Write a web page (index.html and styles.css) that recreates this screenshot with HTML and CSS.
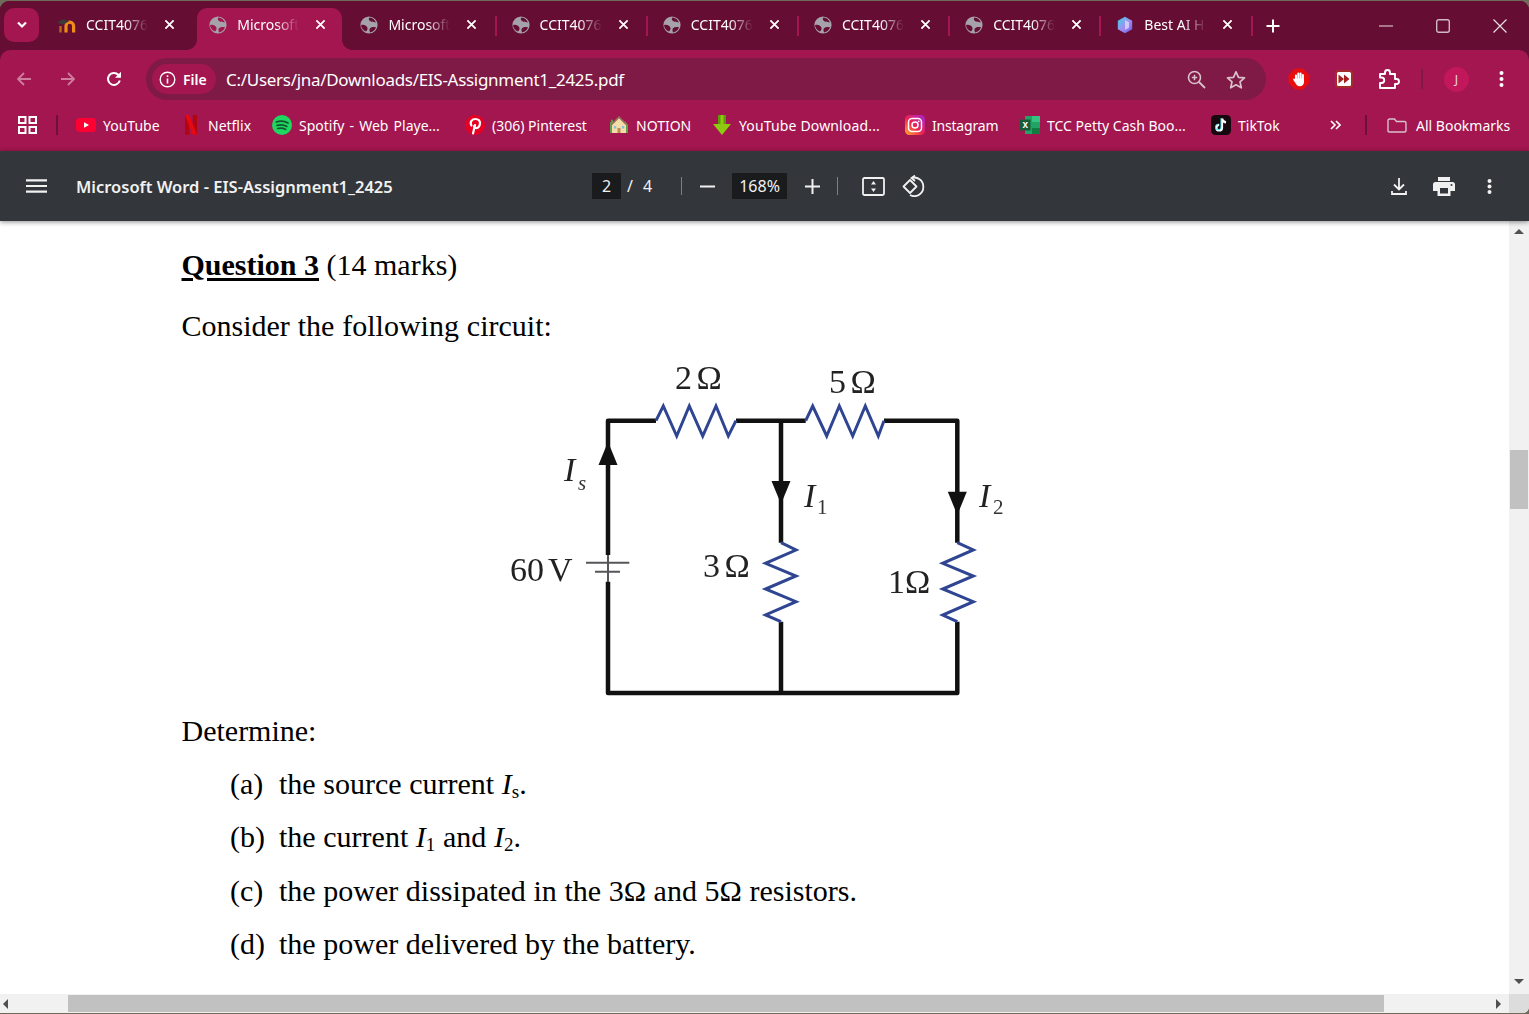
FILE: index.html
```html
<!DOCTYPE html>
<html lang="en">
<head>
  <meta charset="UTF-8">
  <title>Microsoft Word - EIS-Assignment1_2425</title>
  <link rel="stylesheet" href="styles.css">
</head>
<body>
  <svg class="defs" width="0" height="0">
    <symbol id="ic-x" viewBox="0 0 12 12"><path d="M1.5 1.5l9 9M10.5 1.5l-9 9" fill="none" stroke="currentColor" stroke-width="2"/></symbol>
    <symbol id="ic-globe" viewBox="0 0 18 18">
      <circle cx="9" cy="9" r="8.6" fill="#a5a3a9"/>
      <path d="M9.5 1.4C8 3 9.2 4.6 11 5.4c1.8.8 3.600.4 4.900 1.100C15 3.800 12.500 1.600 9.500 1.400zM1 9.200c2.300-.9 4.500-.1 6 1.600 1.200 1.500.4 3.800-1 4.700-2.800-1.100-4.800-3.400-5-6.300zM10 12.200c1.600-1.500 3.900-1.500 6-1-.9 2.700-3.100 4.700-5.800 5.300-.8-1.300-1.100-3.100-.2-4.300z" fill="currentColor"/>
    </symbol>
  </svg>

  <div class="window">
    <!-- Tabs -->
    <div class="tabstrip">
      <div class="tab-search">
        <svg width="12" height="8" viewBox="0 0 12 8"><path d="M2 1.500l4 4 4-4" fill="none" stroke="#fff" stroke-width="2.200"/></svg>
      </div>
      <div class="tab no-sep">
        <svg class="favicon moodle" viewBox="0 0 20 18">
          <path d="M3.500 10v6.500" stroke="#b8691a" stroke-width="2.400" fill="none"/>
          <path d="M9 16.500V10a3.800 3.800 0 0 1 7.600 0v6.500" fill="none" stroke="#ee8d17" stroke-width="3.200"/>
          <path d="M0 6.500L6.500 3 12 5.500 5.500 8.800z" fill="#3c3b3a"/>
        </svg>
        <span class="tab-title">CCIT4076</span>
        <svg class="tab-close"><use href="#ic-x"/></svg>
      </div>
      <div class="tab tab-active no-sep">
        <svg class="favicon globe"><use href="#ic-globe"/></svg>
        <span class="tab-title">Microsoft</span>
        <svg class="tab-close"><use href="#ic-x"/></svg>
      </div>
      <div class="tab">
        <svg class="favicon globe"><use href="#ic-globe"/></svg>
        <span class="tab-title">Microsoft</span>
        <svg class="tab-close"><use href="#ic-x"/></svg>
      </div>
      <div class="tab">
        <svg class="favicon globe"><use href="#ic-globe"/></svg>
        <span class="tab-title">CCIT4076</span>
        <svg class="tab-close"><use href="#ic-x"/></svg>
      </div>
      <div class="tab">
        <svg class="favicon globe"><use href="#ic-globe"/></svg>
        <span class="tab-title">CCIT4076</span>
        <svg class="tab-close"><use href="#ic-x"/></svg>
      </div>
      <div class="tab">
        <svg class="favicon globe"><use href="#ic-globe"/></svg>
        <span class="tab-title">CCIT4076</span>
        <svg class="tab-close"><use href="#ic-x"/></svg>
      </div>
      <div class="tab">
        <svg class="favicon globe"><use href="#ic-globe"/></svg>
        <span class="tab-title">CCIT4076</span>
        <svg class="tab-close"><use href="#ic-x"/></svg>
      </div>
      <div class="tab">
        <svg class="favicon" viewBox="0 0 18 18">
          <defs><linearGradient id="hexfill" x1="0" y1="0" x2="1" y2="1"><stop offset="0" stop-color="#38d6e8"/><stop offset=".55" stop-color="#a58bf0"/><stop offset="1" stop-color="#5a5ae6"/></linearGradient></defs>
          <path d="M9 .8l7.200 4v8.400L9 17.200 1.800 13.200V4.800z" fill="url(#hexfill)"/>
          <path d="M9 4l4 2.200v5.600L9 14z" fill="#e6dcff" opacity=".75"/>
        </svg>
        <span class="tab-title">Best AI H</span>
        <svg class="tab-close"><use href="#ic-x"/></svg>
      </div>
      <svg class="new-tab" width="14" height="14" viewBox="0 0 14 14"><path d="M7 .5v13M.5 7h13" stroke="#fff" stroke-width="2"/></svg>
      <div class="win-controls">
        <svg width="14" height="14" viewBox="0 0 14 14"><path d="M0 7h14" stroke="#eadfe4" stroke-width="1.200"/></svg>
        <svg width="14" height="14" viewBox="0 0 14 14"><rect x=".7" y=".7" width="12.600" height="12.600" rx="2" fill="none" stroke="#cdbcc4" stroke-width="1.400"/></svg>
        <svg width="14" height="14" viewBox="0 0 14 14"><path d="M.5.500l13 13M13.500.500l-13 13" stroke="#eadfe4" stroke-width="1.200"/></svg>
      </div>
    </div>

    <!-- Toolbar -->
    <div class="toolbar">
      <svg class="nav-btn faded" viewBox="0 0 16 16"><path d="M15 8H2M8 2L2 8l6 6" fill="none" stroke="currentColor" stroke-width="1.800"/></svg>
      <svg class="nav-btn faded" viewBox="0 0 16 16"><path d="M1 8h13M8 2l6 6-6 6" fill="none" stroke="currentColor" stroke-width="1.800"/></svg>
      <svg class="nav-btn reload" viewBox="0 0 16 16"><path d="M13.800 9.500A6 6 0 1 1 12.300 3.700L14.500 6" fill="none" stroke="currentColor" stroke-width="2"/><path d="M15 .8V6.800H9z" fill="currentColor"/></svg>
      <div class="omnibox">
        <div class="file-chip">
          <svg width="17" height="17" viewBox="0 0 17 17"><circle cx="8.500" cy="8.500" r="7.300" fill="none" stroke="#fff" stroke-width="1.400"/><path d="M8.500 7.500v5M8.500 4.300v1.600" stroke="#fff" stroke-width="1.600"/></svg>
          <span>File</span>
        </div>
        <span class="url">C:/Users/jna/Downloads/EIS-Assignment1_2425.pdf</span>
        <svg class="omni-icon" width="19" height="19" viewBox="0 0 19 19"><circle cx="7.500" cy="7.500" r="6" fill="none" stroke="#d9c2cc" stroke-width="1.600"/><path d="M12 12l6 6" stroke="#d9c2cc" stroke-width="1.800"/><path d="M7.500 4.800v5.400M4.800 7.500h5.400" stroke="#d9c2cc" stroke-width="1.500"/></svg>
        <svg class="omni-icon" width="20" height="19" viewBox="0 0 20 19"><path d="M10 1.800l2.500 5.500 6 .6-4.500 4 1.300 5.900L10 14.800 4.700 17.800 6 11.900 1.500 7.900l6-.6z" fill="none" stroke="#d9c2cc" stroke-width="1.700" stroke-linejoin="round"/></svg>
      </div>
      <svg class="ext-block" width="22" height="22" viewBox="0 0 22 22">
        <path d="M7 .5h8L21.500 7v8L15 21.500H7L.5 15V7z" fill="#e60f0f"/>
        <path d="M8 12V7.500M10.300 11V5.500M12.600 11V5.500M14.900 12V7" fill="none" stroke="#fff" stroke-width="2" stroke-linecap="round"/>
        <path d="M7 10.500h9V14c0 2.600-1.700 4.200-4.200 4.200-2.200 0-3.200-1.100-4.200-2.900L5.300 12c-.6-1.200.9-2 1.700-.8z" fill="#fff"/>
      </svg>
      <svg class="ext-skip" width="18" height="18" viewBox="0 0 18 18">
        <rect width="18" height="18" rx="3" fill="#a52a2a"/><rect x="2" y="2" width="14" height="14" rx="1.500" fill="#fff"/>
        <path d="M3.500 4.500L9 9l-5.500 4.500zM9 4.500L14.500 9 9 13.500z" fill="#a3201f"/>
      </svg>
      <svg class="ext-puzzle" width="22" height="22" viewBox="0 0 22 22"><path d="M2 6h5V4.500a2.500 2.500 0 0 1 5 0V6h5v5h1.500a2.500 2.500 0 0 1 0 5H17v4H2v-5h1.500a2.500 2.500 0 0 0 0-5.500H2z" fill="none" stroke="#fff" stroke-width="1.900" stroke-linejoin="round"/></svg>
      <span class="tool-sep"></span>
      <div class="avatar">J</div>
      <svg class="dots" width="5" height="16" viewBox="0 0 5 16"><circle cx="2.500" cy="2" r="2" fill="#fff"/><circle cx="2.500" cy="8" r="2" fill="#fff"/><circle cx="2.500" cy="14" r="2" fill="#fff"/></svg>
    </div>

    <!-- Bookmarks -->
    <div class="bookmarks">
      <svg class="apps" width="19" height="18" viewBox="0 0 19 18"><path d="M1 1h6.500v6H1zM11.500 1H18v6h-6.500zM1 11h6.500v6H1zM11.500 11H18v6h-6.500z" fill="none" stroke="#fff" stroke-width="2"/></svg>
      <span class="bm-sep"></span>
      <div class="bm bm-youtube">
        <svg class="bm-icon" viewBox="0 0 20 20"><rect y="3" width="20" height="14" rx="4" fill="#ff0033"/><path d="M8 7.200l5 2.800-5 2.800z" fill="#fff"/></svg>
        <span>YouTube</span>
      </div>
      <div class="bm bm-netflix">
        <svg class="bm-icon" viewBox="0 0 20 20"><path d="M4 0h4.200v20L4 19.500z" fill="#b1060f"/><path d="M11.800 0H16v19.500L11.800 20z" fill="#b1060f"/><path d="M4 0h4.200l7.800 19.500-4.200.5z" fill="#e50914"/></svg>
        <span>Netflix</span>
      </div>
      <div class="bm bm-spotify">
        <svg class="bm-icon" viewBox="0 0 20 20"><circle cx="10" cy="10" r="10" fill="#1ed760"/><path d="M4.200 7c4-1.200 8.500-.9 11.800 1M5 10.400c3.400-1 7-.7 9.900 1M5.600 13.500c2.800-.8 5.700-.5 8.100.9" fill="none" stroke="#14542c" stroke-width="1.700" stroke-linecap="round"/></svg>
        <span>Spotify - Web Playe...</span>
      </div>
      <div class="bm bm-pinterest">
        <svg class="bm-icon" viewBox="0 0 20 20"><circle cx="10" cy="10" r="10" fill="#e60023"/><path d="M8 18.500l2-8.500M6.400 10.500C4.500 7 7 4 10.500 4c3 0 4.800 2 4.500 4.700-.3 2.800-2 4.600-4 4.300-1.300-.2-2-1-1.900-2" fill="none" stroke="#fff" stroke-width="2.200" stroke-linecap="round"/></svg>
        <span>(306) Pinterest</span>
      </div>
      <div class="bm bm-notion">
        <svg class="bm-icon" viewBox="0 0 20 20"><path d="M1 8l2-4 2 3v11H1zM16 6l3 4v8h-3z" fill="#5f9e4a"/><path d="M3 10l7-7 7 7v8H3z" fill="#f4dba8"/><path d="M1.500 10.500L10 2l8.500 8.500" fill="none" stroke="#8d7a5a" stroke-width="1.400"/><path d="M8.500 13h3v5h-3z" fill="#b98b52"/><path d="M5 11h2.200v2.500H5zM13 11h2.200v2.500H13z" fill="#7fc1e8"/></svg>
        <span>NOTION</span>
      </div>
      <div class="bm bm-ytdl">
        <svg class="bm-icon" viewBox="0 0 20 20"><path d="M6 0h8v9h5l-9 11L1 9h5z" fill="#8ecb10"/><path d="M6 0h2.500v9H6zM11.500 0H14v9h-2.500z" fill="#5f9908"/></svg>
        <span>YouTube Download...</span>
      </div>
      <div class="bm bm-insta">
        <svg class="bm-icon" viewBox="0 0 20 20">
          <defs><linearGradient id="igfill" x1="0" y1="1" x2="1" y2="0"><stop offset="0" stop-color="#feb32b"/><stop offset=".45" stop-color="#f0234f"/><stop offset="1" stop-color="#a524d8"/></linearGradient></defs>
          <rect width="20" height="20" rx="4.500" fill="url(#igfill)"/><rect x="3.500" y="3.500" width="13" height="13" rx="3.500" fill="none" stroke="#fff" stroke-width="1.500"/><circle cx="10" cy="10" r="3" fill="none" stroke="#fff" stroke-width="1.500"/><circle cx="13.700" cy="6.300" r=".9" fill="#fff"/>
        </svg>
        <span>Instagram</span>
      </div>
      <div class="bm bm-tcc">
        <svg class="bm-icon" viewBox="0 0 20 20"><path d="M5 1h15v18H5z" fill="#21a366"/><path d="M12 1h8v6h-8z" fill="#33c481"/><path d="M12 13h8v6h-8z" fill="#107c41"/><path d="M0 4.500h10.500v11H0z" fill="#185c37"/><text class="xl-text" x="5.200" y="13.200">x</text></svg>
        <span>TCC Petty Cash Boo...</span>
      </div>
      <div class="bm bm-tiktok">
        <svg class="bm-icon" viewBox="0 0 20 20"><rect width="20" height="20" rx="4.500" fill="#15090f"/><path d="M11 3.500v9.200a2.800 2.800 0 1 1-2.800-2.800M11 3.500c.3 2.200 1.800 3.600 4 3.800" fill="none" stroke="#fff" stroke-width="2.200"/><path d="M10 3v9a2.800 2.800 0 1 1-2.800-2.800" fill="none" stroke="#35e3e9" stroke-width=".9"/></svg>
        <span>TikTok</span>
      </div>
      <svg class="bm-more" width="11" height="10" viewBox="0 0 11 10"><path d="M1 1l4 4-4 4M6 1l4 4-4 4" fill="none" stroke="#fff" stroke-width="1.600"/></svg>
      <span class="bm-sep bm-sep-right"></span>
      <div class="bm bm-all">
        <svg class="bm-icon" viewBox="0 0 20 20"><path d="M1 5.500a1.500 1.500 0 0 1 1.500-1.500h5l2 2.500h8a1.500 1.500 0 0 1 1.500 1.500v7.500a1.500 1.500 0 0 1-1.500 1.500h-15A1.500 1.500 0 0 1 1 15z" fill="none" stroke="#d9c2cc" stroke-width="1.400"/></svg>
        <span>All Bookmarks</span>
      </div>
    </div>

    <!-- PDF viewer toolbar -->
    <div class="pdf-bar">
      <svg class="pdf-menu" width="21" height="14" viewBox="0 0 21 14"><path d="M0 1.300h21M0 7h21M0 12.700h21" stroke="#f1f1f1" stroke-width="2.200"/></svg>
      <span class="pdf-title">Microsoft Word - EIS-Assignment1_2425</span>
      <span class="num-box page-box">2</span>
      <span class="pdf-slash">/</span>
      <span class="pdf-total">4</span>
      <span class="pdf-sep sep-a"></span>
      <svg class="zoom-btn minus" width="15" height="15" viewBox="0 0 15 15"><path d="M0 7.500h15" stroke="#f1f1f1" stroke-width="2"/></svg>
      <span class="num-box zoom-box">168%</span>
      <svg class="zoom-btn plus" width="15" height="15" viewBox="0 0 15 15"><path d="M0 7.500h15M7.500 0v15" stroke="#f1f1f1" stroke-width="2"/></svg>
      <span class="pdf-sep sep-b"></span>
      <svg class="fit-btn" width="23" height="19" viewBox="0 0 23 19"><rect x="1" y="1" width="21" height="17" rx="1.500" fill="none" stroke="#f1f1f1" stroke-width="1.800"/><path d="M11.500 4l2.500 3.500H9zM11.500 15L9 11.500h5z" fill="#f1f1f1"/></svg>
      <svg class="rotate-btn" width="23" height="22" viewBox="0 0 23 22"><path d="M8 5L14.500 11.500 8 18 1.500 11.500z" fill="none" stroke="#f1f1f1" stroke-width="1.800" stroke-linejoin="round"/><path d="M9.500 3a9 9 0 0 1 11.800 8.500A9 9 0 0 1 8 20" fill="none" stroke="#f1f1f1" stroke-width="1.800"/><path d="M13 .5L9.500 3l3.500 3" fill="none" stroke="#f1f1f1" stroke-width="1.800"/></svg>
      <div class="pdf-right">
        <svg width="16" height="17" viewBox="0 0 16 17"><path d="M8 0v11M3 6.500l5 5 5-5" fill="none" stroke="#f1f1f1" stroke-width="1.800"/><path d="M1 13v3h14v-3" fill="none" stroke="#f1f1f1" stroke-width="1.800"/></svg>
        <svg class="print-btn" width="22" height="19" viewBox="0 0 22 19"><path d="M5 0h12v4H5z" fill="#f1f1f1"/><path d="M2.500 5h17A2.500 2.500 0 0 1 22 7.500V14h-4.500v5h-13v-5H0V7.500A2.500 2.500 0 0 1 2.500 5z" fill="#f1f1f1"/><path d="M7 11h8v5.500H7z" fill="#33363a"/><circle cx="18.500" cy="8" r="1" fill="#33363a"/></svg>
        <svg width="5" height="15" viewBox="0 0 5 15"><circle cx="2.500" cy="2" r="2" fill="#f1f1f1"/><circle cx="2.500" cy="7.500" r="2" fill="#f1f1f1"/><circle cx="2.500" cy="13" r="2" fill="#f1f1f1"/></svg>
      </div>
    </div>

    <!-- Page -->
    <div class="viewer">
      <div class="doc">
        <p class="doc-line"><b class="q-title">Question 3</b> (14 marks)</p>
        <p class="doc-line consider">Consider the following circuit:</p>
        <svg class="circuit" width="520" height="360" viewBox="500 350 520 360">
          <path class="wire" d="M608 555V420.700H656M736 420.700H805.700M884 420.700H957.300V542.700M781 420.700V542.700M781 621.700V693M957.300 621.700V693H608V581.700"/>
          <path class="plate" d="M608 555V582"/>
          <path class="plate" d="M586 562.700H629.300M595 571.700H620"/>
          <path class="res" d="M656 420.700L663.300 406 676.700 436 689.300 406 702.700 436 716 406 728.300 436 736 420.700"/>
          <path class="res" d="M805.700 420.700L812.700 406 826.700 436 839.300 406 852.700 436 865.300 406 878.300 436 884 420.700"/>
          <path class="res" d="M781 542.700L796 550 765.500 563.300 796 576 765.500 589 796 601.700 765.500 615 781 621.700"/>
          <path class="res" d="M957.300 542.700L973.300 550 942.700 563.300 973.300 576 942.700 589 973.300 601.700 942.700 615 957.300 621.700"/>
          <path class="arrow" d="M608 441.700L617.500 465H598.500z"/>
          <path class="arrow" d="M781 504L771.500 481H790.500z"/>
          <path class="arrow" d="M957.300 515L947.800 491.700H966.800z"/>
          <text class="lbl" x="675" y="389">2 Ω</text>
          <text class="lbl" x="829" y="393">5 Ω</text>
          <text class="lbl" x="703" y="577">3 Ω</text>
          <text class="lbl" x="888" y="593">1Ω</text>
          <text class="lbl" x="510" y="581">60 V</text>
          <text class="lbl lbl-i" x="564" y="481">I</text>
          <text class="lbl-s lbl-i" x="578" y="490">s</text>
          <text class="lbl lbl-i" x="804" y="507">I</text>
          <text class="lbl-s" x="817" y="514">1</text>
          <text class="lbl lbl-i" x="979" y="507">I</text>
          <text class="lbl-s" x="993" y="514">2</text>
        </svg>
        <p class="doc-line determine">Determine:</p>
        <div class="parts">
          <span>(a)</span><span>the source current <i>I</i><span class="sub">s</span>.</span>
          <span>(b)</span><span>the current <i>I</i><span class="sub">1</span> and <i>I</i><span class="sub">2</span>.</span>
          <span>(c)</span><span>the power dissipated in the 3Ω and 5Ω resistors.</span>
          <span>(d)</span><span>the power delivered by the battery.</span>
        </div>
      </div>
      <div class="vscroll">
        <span class="tri tri-up"></span>
        <span class="vthumb"></span>
        <span class="tri tri-down"></span>
      </div>
      <div class="hscroll">
        <span class="tri tri-left"></span>
        <span class="hthumb"></span>
        <span class="tri tri-right"></span>
      </div>
      <div class="corner"></div>
    </div>
  </div>
</body>
</html>
```

FILE: styles.css
```css
html, body {
  margin: 0;
  height: 100%;
  overflow: hidden;
}
body {
  background-color: #6f6b5a;
  font-family: 'Noto Sans', sans-serif;
}
.defs {
  display: block;
  height: 0;
}
.window {
  margin-top: 1px;
  height: 1012px;
  display: flex;
  flex-direction: column;
  border-radius: 9px 9px 6px 0;
  overflow: hidden;
  background-color: #650d33;
}

/* tabs */
.tabstrip {
  height: 49px;
  display: flex;
  flex-shrink: 0;
  align-items: flex-start;
  background-color: #650d33;
  color: #fff;
}
.tab-search {
  width: 35px;
  height: 34px;
  margin: 7px 5px 0 4px;
  border-radius: 10px;
  background-color: #a3164f;
  display: flex;
  align-items: center;
  justify-content: center;
}
.tab {
  position: relative;
  width: 151.2px;
  height: 49px;
  padding: 0 0 2px 14px;
  box-sizing: border-box;
  display: flex;
  align-items: center;
  flex-shrink: 0;
  font-size: 14px;
}
.tab::before {
  content: "";
  position: absolute;
  right: 1px;
  top: 15px;
  width: 2px;
  height: 20px;
  background-color: #a3164f;
}
.tab.no-sep::before {
  display: none;
}
.tab-active {
  z-index: 1;
}
.tab-active .tab-title, .tab-active .favicon, .tab-active .tab-close {
  position: relative;
}
.tab-active::before {
  display: block !important;
  left: 2px;
  right: 4px;
  top: 7px;
  bottom: 0;
  width: auto;
  height: auto;
  border-radius: 10px 10px 0 0;
}
.tab-active::after {
  content: "";
  position: absolute;
  left: -8px;
  right: -6px;
  bottom: 0;
  height: 10px;
  background:
    radial-gradient(circle at 0 0, transparent 9.5px, #a3164f 10px) left bottom / 10px 10px no-repeat,
    radial-gradient(circle at 100% 0, transparent 9.5px, #a3164f 10px) right bottom / 10px 10px no-repeat;
}
.favicon {
  width: 18px;
  height: 18px;
  flex-shrink: 0;
}
.moodle {
  width: 20px;
  margin: 0 -1px;
}
.globe {
  color: #650d33;
}
.tab-active .globe {
  color: #a3164f;
}
.tab-title {
  width: 62px;
  margin-left: 10px;
  white-space: nowrap;
  -webkit-mask-image: linear-gradient(to right, #000 62%, transparent 100%);
  mask-image: linear-gradient(to right, #000 62%, transparent 100%);
}
.tab-close {
  width: 11px;
  height: 11px;
  margin-left: 16px;
  color: #fff;
  flex-shrink: 0;
}
.new-tab {
  margin: 18px 0 0 12px;
  flex-shrink: 0;
}
.win-controls {
  margin: 18px 22px 0 auto;
  display: flex;
  gap: 43px;
}

/* toolbar */
.toolbar {
  height: 50px;
  flex-shrink: 0;
  padding-top: 8px;
  box-sizing: border-box;
  display: flex;
  align-items: center;
  align-self: stretch;
  background-color: #a3164f;
  border-radius: 10px 10px 0 0;
  color: #fff;
}
.nav-btn {
  width: 16px;
  height: 16px;
  margin-left: 16px;
  margin-right: 12px;
  flex-shrink: 0;
}
.nav-btn + .nav-btn {
  margin-left: 16px;
}
.nav-btn.reload {
  margin-left: 18px;
  margin-right: 10px;
}
.faded {
  color: #cf7d9e;
}
.omnibox {
  width: 1120px;
  height: 42px;
  margin-left: 14px;
  padding: 0 20px 0 6px;
  box-sizing: border-box;
  display: flex;
  align-items: center;
  border-radius: 21px;
  background-color: #7e1a45;
}
.file-chip {
  width: 64px;
  height: 30px;
  padding-left: 7px;
  box-sizing: border-box;
  display: flex;
  align-items: center;
  gap: 7px;
  border-radius: 15px;
  background-color: #a3164f;
  font-size: 14px;
  font-weight: 600;
}
.url {
  margin-left: 10px;
  font-size: 17px;
  letter-spacing: -0.29px;
}
.omni-icon:first-of-type {
  margin-left: auto;
}
.omni-icon + .omni-icon {
  margin-left: 20px;
}
.ext-block {
  margin-left: 22px;
}
.ext-skip {
  margin-left: 25px;
}
.ext-puzzle {
  margin-left: 25px;
}
.tool-sep {
  width: 2px;
  height: 20px;
  margin-left: 21px;
  background-color: #7e1a45;
}
.avatar {
  width: 25px;
  height: 25px;
  margin-left: 21px;
  border-radius: 50%;
  background-color: #c2185b;
  font-size: 12px;
  line-height: 25px;
  text-align: center;
  color: #f3d9e4;
}
.dots {
  margin-left: 30px;
}

/* bookmarks */
.bookmarks {
  height: 51px;
  flex-shrink: 0;
  padding: 0 0 1px 18px;
  box-sizing: border-box;
  display: flex;
  align-items: center;
  background-color: #a3164f;
  color: #fff;
  font-size: 14px;
}
.apps {
  flex-shrink: 0;
}
.bm-sep {
  width: 2px;
  height: 20px;
  margin: 0 18px 0 19px;
  background-color: #6d1138;
  flex-shrink: 0;
}
.bm {
  display: flex;
  align-items: center;
  gap: 7px;
  flex-shrink: 0;
  white-space: nowrap;
}
.bm-youtube { width: 105px; }
.bm-netflix { width: 91px; }
.bm-spotify { width: 193px; word-spacing: 1.5px; }
.bm-pinterest { width: 144px; }
.bm-notion { width: 103px; }
.bm-ytdl { width: 193px; letter-spacing: 0.15px; }
.bm-insta { width: 115px; letter-spacing: -0.2px; }
.bm-tcc { width: 191px; }
.bm-tiktok { width: 119px; }
.bm-icon {
  width: 20px;
  height: 20px;
  flex-shrink: 0;
}
.xl-text {
  font-family: 'Liberation Sans', sans-serif;
  font-size: 10px;
  font-weight: 700;
  fill: #fff;
  text-anchor: middle;
}
.bm-more {
  flex-shrink: 0;
}
.bm-sep-right {
  margin: 0 20px 0 24px;
}
.bm-all {
  gap: 9px;
}

/* pdf toolbar */
.pdf-bar {
  position: relative;
  z-index: 2;
  height: 70px;
  flex-shrink: 0;
  padding-left: 26px;
  display: flex;
  align-items: center;
  background-color: #33363a;
  box-shadow: 0 1px 5px rgba(0, 0, 0, 0.45);
  color: #f1f1f1;
  font-size: 16px;
}
.pdf-menu {
  margin-right: 29px;
}
.pdf-title {
  width: 516px;
  font-size: 16.5px;
  font-weight: 600;
  white-space: nowrap;
}
.num-box {
  height: 26px;
  line-height: 26px;
  text-align: center;
  background-color: #191b1c;
}
.page-box {
  width: 29px;
}
.pdf-slash {
  margin-left: 6px;
}
.pdf-total {
  margin-left: 10px;
}
.pdf-sep {
  width: 1px;
  height: 18px;
  background-color: #7d8084;
}
.sep-a {
  margin-left: 29px;
}
.minus {
  margin-left: 18px;
}
.zoom-box {
  width: 55px;
  margin-left: 17px;
}
.plus {
  margin-left: 18px;
}
.sep-b {
  margin-left: 17px;
}
.fit-btn {
  margin-left: 24px;
}
.rotate-btn {
  margin-left: 17px;
}
.pdf-right {
  margin-left: auto;
  margin-right: 37px;
  display: flex;
  align-items: center;
  gap: 27px;
}
.print-btn {
  margin: 0 5px 0 -1px;
}

/* page */
.viewer {
  flex: 1;
  min-height: 0;
  display: grid;
  grid-template-columns: 1fr 20px;
  grid-template-rows: 1fr 19px;
  background-color: #fff;
}
.doc {
  padding: 24px 0 0 181.5px;
  overflow: hidden;
  font-family: 'Liberation Serif', serif;
  font-size: 30px;
  line-height: 40px;
  color: #000;
}
.doc-line {
  margin: 0;
  white-space: nowrap;
}
.q-title {
  text-decoration: underline;
  text-decoration-thickness: 3px;
  text-underline-offset: 3px;
}
.consider {
  margin-top: 21px;
  word-spacing: 0.4px;
}
.circuit {
  display: block;
  margin: 4px 0 1px 318.5px;
  filter: blur(0.4px);
}
.parts {
  margin: 13px 0 0 48.5px;
  display: grid;
  grid-template-columns: 49px 1fr;
  row-gap: 13.3px;
  white-space: nowrap;
  word-spacing: 0.12px;
}
.sub {
  font-size: 19px;
  line-height: 0;
  vertical-align: -4px;
}
.wire {
  fill: none;
  stroke: #111;
  stroke-width: 4.5;
  stroke-linejoin: round;
}
.plate {
  fill: none;
  stroke: #55565a;
  stroke-width: 2;
}
.res {
  fill: none;
  stroke: #2f4592;
  stroke-width: 3;
  stroke-linejoin: miter;
}
.arrow {
  fill: #111;
}
.lbl {
  font-family: 'Liberation Serif', serif;
  font-size: 34px;
  fill: #222;
  word-spacing: -4px;
}
.lbl-s {
  font-family: 'Liberation Serif', serif;
  font-size: 21px;
  fill: #333;
}
.lbl-i {
  font-style: italic;
}

/* scrollbars */
.vscroll {
  background-color: #f1f1f1;
  display: flex;
  flex-direction: column;
  align-items: center;
}
.vthumb {
  width: 18px;
  height: 59px;
  margin-top: 216px;
  background-color: #c1c1c1;
}
.hscroll {
  background-color: #f1f1f1;
  display: flex;
  align-items: center;
  padding: 0 8px 0 3px;
}
.hthumb {
  width: 1316px;
  height: 17px;
  margin-left: 60px;
  background-color: #c1c1c1;
}
.corner {
  background-color: #dcdcdc;
}
.tri {
  width: 0;
  height: 0;
  flex-shrink: 0;
  border-style: solid;
  border-color: transparent;
}
.tri-up {
  margin-top: 8px;
  border-width: 0 5px 5px;
  border-bottom-color: #505050;
}
.tri-down {
  margin-top: auto;
  margin-bottom: 10px;
  border-width: 5px 5px 0;
  border-top-color: #505050;
}
.tri-left {
  border-width: 5px 5px 5px 0;
  border-right-color: #505050;
}
.tri-right {
  margin-left: auto;
  border-width: 5px 0 5px 5px;
  border-left-color: #505050;
}
```
